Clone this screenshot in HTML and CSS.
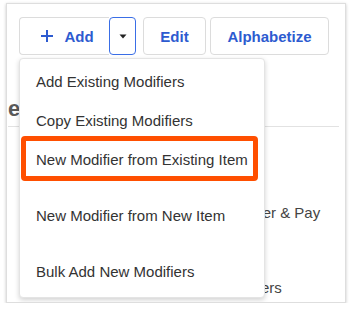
FILE: index.html
```html
<!DOCTYPE html>
<html lang="en">
<head>
    <meta charset="UTF-8">
    <meta name="viewport" content="width=device-width, initial-scale=1.0">
    <title>Modifiers</title>
    <link rel="stylesheet" href="styles.css">
</head>
<body>
    <div class="frame">
        <div class="toolbar">
            <div class="split">
                <button class="btn btn-main">
                    <svg class="plus" width="12" height="12" viewBox="0 0 12 12"><path d="M6 0v12M0 6h12" stroke="#2d5bd0" stroke-width="2" fill="none"/></svg>
                    Add
                </button>
                <button class="btn btn-toggle">
                    <svg width="8" height="5" viewBox="0 0 8 5"><path d="M0.5 0.5h7l-3.5 4z" fill="#222"/></svg>
                </button>
            </div>
            <button class="btn btn-edit">Edit</button>
            <button class="btn btn-alpha">Alphabetize</button>
        </div>

        <h2 class="heading">e</h2>
        <div class="divider"></div>
        <div class="rows">
            <div class="row">In Order &amp; Pay</div>
            <div class="row">Modifiers</div>
        </div>

        <div class="menu">
            <div class="menu-item">Add Existing Modifiers</div>
            <div class="menu-item">Copy Existing Modifiers</div>
            <div class="menu-item menu-item--marked">New Modifier from Existing Item</div>
            <div class="menu-item menu-item--tall menu-item--gap">New Modifier from New Item</div>
            <div class="menu-item menu-item--tall">Bulk Add New Modifiers</div>
        </div>
    </div>
</body>
</html>
```

FILE: styles.css
```css
body {
    margin: 0;
    padding: 0;
    background-color: #fff;
    font-family: "Liberation Sans", Arial, sans-serif;
}

.frame {
    position: relative;
    box-sizing: border-box;
    width: 340px;
    height: 300px;
    margin: 3px 0 0 6px;
    padding: 13px 0 0 12px;
    border: 1px solid #dedede;
    box-shadow: 0 1px 3px rgba(0, 0, 0, 0.22);
    background-color: #fff;
    overflow: hidden;
}

.toolbar {
    display: flex;
}

.split {
    display: flex;
}

.btn {
    box-sizing: border-box;
    height: 38px;
    display: flex;
    align-items: center;
    justify-content: center;
    background-color: #fff;
    border: 1px solid #dcdcdc;
    border-radius: 4px;
    color: #2d5bd0;
    font-family: "Liberation Sans", Arial, sans-serif;
    font-size: 15px;
    font-weight: bold;
    padding: 0;
    cursor: pointer;
}

.btn-main {
    width: 90px;
    padding: 0 0 0 6px;
    border-right: none;
    border-radius: 4px 0 0 4px;
}

.plus {
    margin-right: 11px;
}

.btn-toggle {
    width: 27px;
    border: 1px solid #3a6ee6;
    border-radius: 4px;
}

.btn-edit {
    width: 63px;
    margin-left: 7px;
}

.btn-alpha {
    width: 119px;
    margin-left: 4px;
}

.heading {
    margin: 41px 0 0 -11px;
    font-size: 22px;
    font-weight: bold;
    color: #5a5a5a;
}

.divider {
    height: 1px;
    margin: 4px 6px 0 -11px;
    background-color: #e2e2e2;
}

.rows {
    margin-top: 48px;
    padding-left: 202px;
}

.row {
    height: 75px;
    line-height: 75px;
    font-size: 15px;
    color: #444;
}

.menu {
    position: absolute;
    left: 12px;
    top: 54px;
    box-sizing: border-box;
    width: 246px;
    height: 240px;
    padding-top: 3px;
    background-color: #fff;
    border: 1px solid #e4e4e4;
    border-radius: 4px;
    box-shadow: 0 2px 5px rgba(0, 0, 0, 0.18);
}

.menu-item {
    position: relative;
    height: 39px;
    line-height: 39px;
    padding-left: 16px;
    font-size: 15px;
    color: #333;
    white-space: nowrap;
}

.menu-item--tall {
    height: 56px;
    line-height: 56px;
}

.menu-item--gap {
    margin-top: 9px;
}

.menu-item--marked::after {
    content: "";
    position: absolute;
    left: 1px;
    right: 6px;
    top: -4px;
    bottom: -2px;
    border: 5px solid #ff4f00;
    border-radius: 4px;
}
```
